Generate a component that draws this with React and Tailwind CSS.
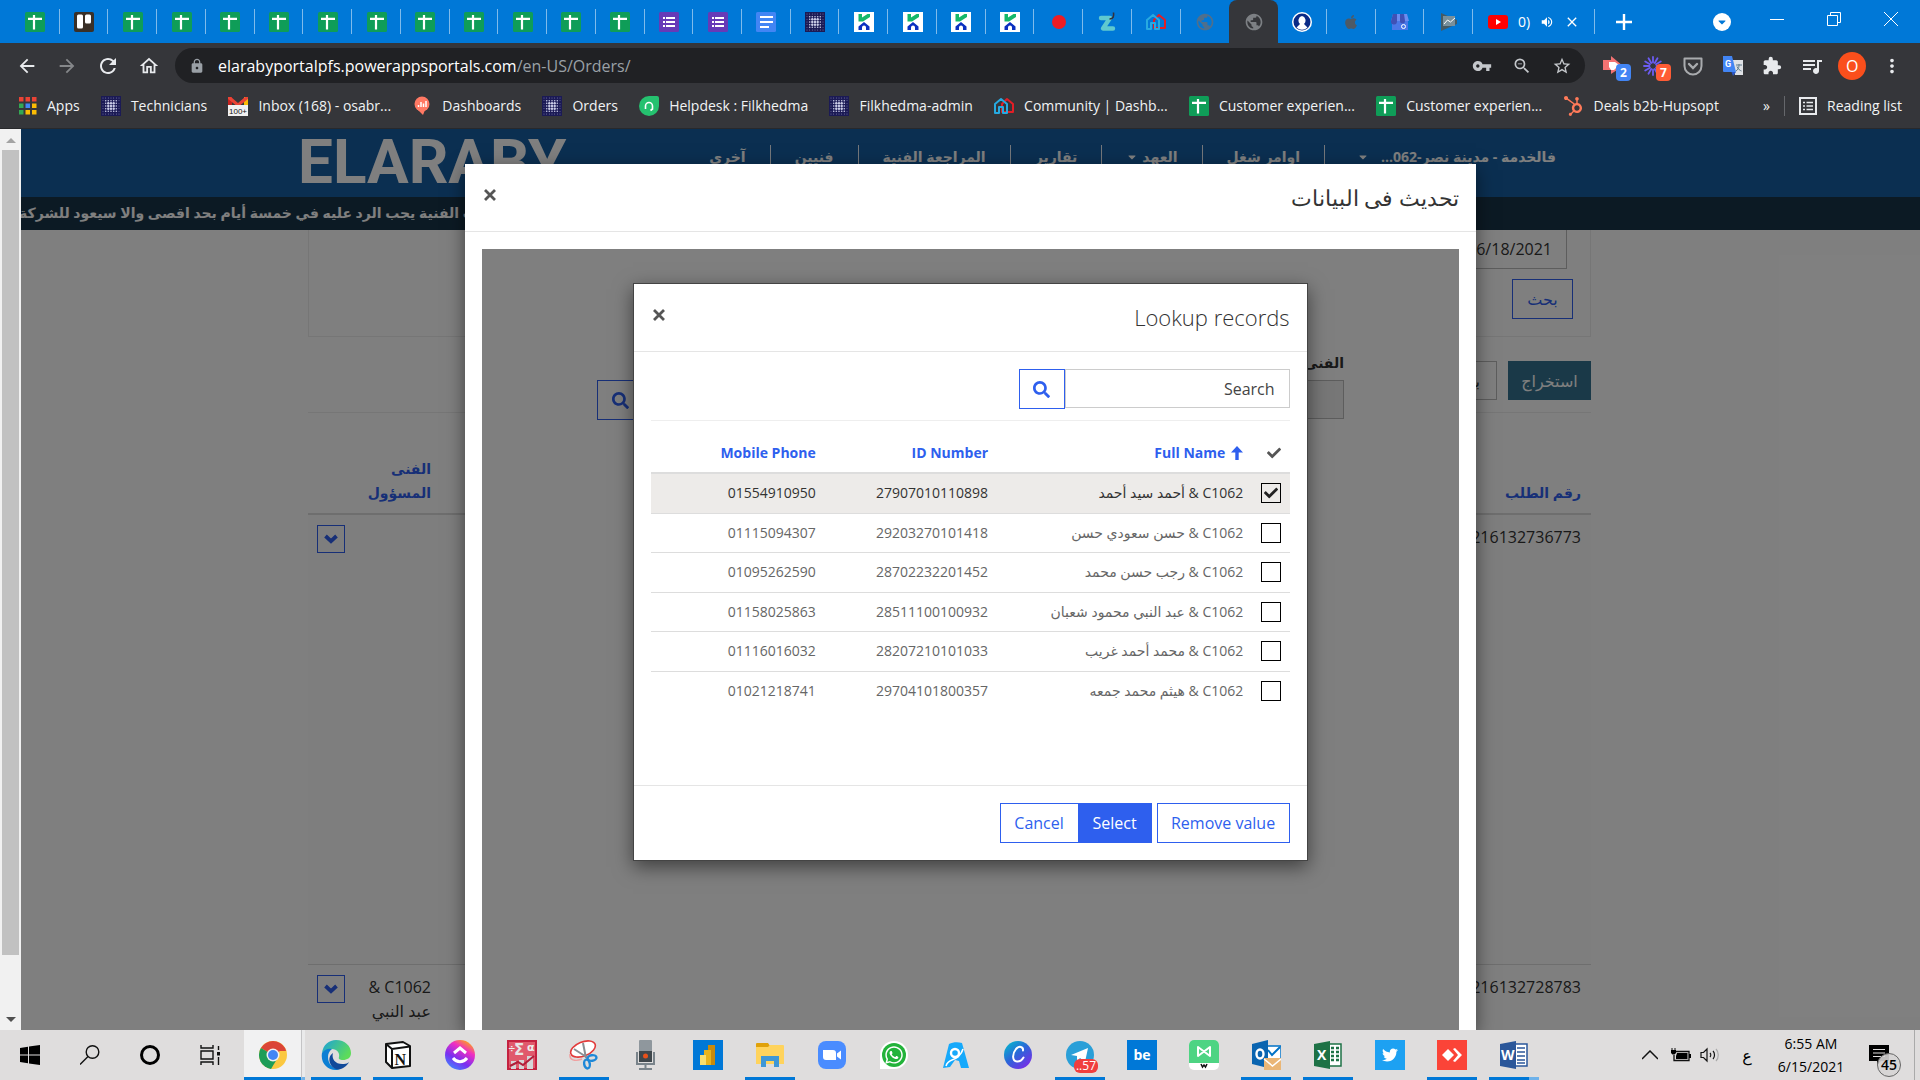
import { useState } from 'react';
import {
  FaApple,
  FaCaretDown,
  FaCheck,
  FaHubspot,
  FaSearch,
  FaTwitter,
  FaWhatsapp
} from 'react-icons/fa';
import {
  MdArrowBack,
  MdArrowForward,
  MdClose,
  MdExtension,
  MdLock,
  MdMoreVert,
  MdOutlineHome,
  MdOutlineZoomOut,
  MdPublic,
  MdQueueMusic,
  MdRefresh,
  MdStarBorder,
  MdVolumeUp,
  MdVpnKey
} from 'react-icons/md';

/* ---------- Site icons ---------- */

const SheetsIcon = () => (
  <svg viewBox="0 0 20 20" className="w-5 h-5">
    <rect width="20" height="20" rx="1.5" fill="#0f9d58" />
    <path d="M3 6.8h14M9 3v14.5" stroke="#fff" strokeWidth="2.2" />
  </svg>
);

const TrelloIcon = () => (
  <svg viewBox="0 0 20 20" className="w-5 h-5">
    <rect width="20" height="20" rx="2" fill="#3a3027" />
    <rect x="3" y="2.5" width="6" height="14" rx="1.5" fill="#fff" />
    <rect x="11" y="2.5" width="6" height="9" rx="1.5" fill="#fff" />
  </svg>
);

const FormsIcon = () => (
  <svg viewBox="0 0 20 20" className="w-5 h-5">
    <rect width="20" height="20" rx="1.5" fill="#673ab7" />
    <path d="M4 6h2M4 10h2M4 14h2M7 6h9M7 10h9M7 14h9" stroke="#fff" strokeWidth="2" />
  </svg>
);

const DocsIcon = () => (
  <svg viewBox="0 0 20 20" className="w-5 h-5">
    <rect width="20" height="20" rx="1.5" fill="#4285f4" />
    <path d="M4 5h13M4 10h13M4 15h9" stroke="#fff" strokeWidth="2" />
  </svg>
);

const DotsIcon = () => (
  <svg viewBox="0 0 20 20" className="w-5 h-5">
    <rect width="20" height="20" fill="#1b1a55" />
    <g fill="#c9cbe6">
      {[2, 4.7, 7.3, 10, 12.7, 15.3, 18].map((x) =>
        [2, 4.7, 7.3, 10, 12.7, 15.3, 18].map((y) => {
          const distance = Math.max(Math.abs(x - 10), Math.abs(y - 10));
          return <circle key={`${x}-${y}`} cx={x} cy={y} r={distance < 3 ? 1.2 : distance < 6 ? 0.8 : 0.4} />;
        })
      )}
    </g>
  </svg>
);

const KIcon = () => (
  <svg viewBox="0 0 20 20" className="w-5 h-5">
    <rect width="20" height="20" fill="#fff" />
    <path d="M4.500 2H8v3.500L13.500 2H16v3l-7 4.500H4.500z" fill="#14b86a" />
    <path d="M4.500 18v-3.500l5.500-4.500 5.500 4.500V18H12v-2.500a2 2 0 0 0-4 0V18z" fill="#0a2fc0" />
  </svg>
);

const RedDotIcon = () => <span className="w-[14px] h-[14px] rounded-full bg-[#ed1c24]" />;

const ZIcon = () => (
  <svg viewBox="0 0 20 20" className="w-5 h-5" fill="none">
    <path d="M3 6h9L5 16.500h10" stroke="#5fc9cf" strokeWidth="4.400" strokeLinejoin="round" strokeLinecap="round" />
    <path d="M11.500 7c4 0 4.500-3 4-6.500" stroke="#33313b" strokeWidth="1.600" />
  </svg>
);

const HouseIcon = () => (
  <svg viewBox="0 0 20 20" className="w-5 h-5" fill="none" strokeWidth="2" strokeLinejoin="round">
    <path d="M8 16V8l5-5 6 5v8z" stroke="#e21e26" />
    <path d="M1 17V8l6-5 6 5v9H9v-6H5v6z" stroke="#27aae1" />
  </svg>
);

const UserIcon = () => (
  <svg viewBox="0 0 20 20" className="w-5 h-5">
    <circle cx="10" cy="10" r="10" fill="#fff" />
    <circle cx="10" cy="10" r="8.500" fill="#0a2a86" />
    <path d="M10 4a4 4.500 0 0 1 2 8l3.500 3.500a8 8 0 0 1-11 0L8 12a4 4.500 0 0 1 2-8z" fill="#fff" />
  </svg>
);

const ShopIcon = () => (
  <svg viewBox="0 0 20 20" className="w-5 h-5">
    <path d="M2 8h16v10H2z" fill="#4a78e8" />
    <path d="M3 2h14l2 7H1z" fill="#6b8df0" />
    <path d="M3 2h4v8a3 3 0 0 1-6-1zM10 2h4l1 7a2.500 2.500 0 0 1-5 0z" fill="#3f51b5" />
    <circle cx="13.500" cy="14.500" r="2" stroke="#fff" fill="none" />
  </svg>
);

const ConsoleIcon = () => (
  <svg viewBox="0 0 20 20" className="w-5 h-5">
    <path d="M2 1l16 7v4L2 19z" fill="#455a64" />
    <path d="M4 4h12v10H4z" fill="#78909c" />
    <path d="M5 12l3.500-4 3 2L16 6" stroke="#fff" fill="none" />
  </svg>
);

const YoutubeIcon = () => (
  <svg viewBox="0 0 20 20" className="w-5 h-5">
    <rect y="3" width="20" height="14" rx="3" fill="#f00" />
    <path d="M8 7v6l5-3z" fill="#fff" />
  </svg>
);

const AppsIcon = () => (
  <svg viewBox="0 0 18 18" className="w-[18px] h-[18px]">
    {['#ea4335', '#ea4335', '#ea4335', '#34a853', '#4285f4', '#fbbc04', '#34a853', '#fbbc04', '#fbbc04'].map((fill, i) => (
      <rect key={i} x={(i % 3) * 6.500} y={Math.floor(i / 3) * 6.500} width="4.500" height="4.500" fill={fill} />
    ))}
  </svg>
);

const GmailIcon = () => (
  <svg viewBox="0 0 20 20" className="w-5 h-5">
    <path d="M0 1h4v9H0z" fill="#c5221f" />
    <path d="M16 1h4v9h-4z" fill="#fbbc04" />
    <path d="M0 1h3l7 6 7-6h3v2L10 11 0 3z" fill="#ea4335" />
    <rect y="9" width="20" height="11" fill="#f1f1f1" />
    <text x="10" y="17.500" fontSize="8" fontFamily="Liberation Sans" textAnchor="middle" fill="#111">100+</text>
  </svg>
);

const RedashIcon = () => (
  <svg viewBox="0 0 20 20" className="w-5 h-5">
    <circle cx="10" cy="8" r="7.500" fill="#ff7964" />
    <path d="M6 14h7l-2 5z" fill="#ff7964" />
    <path d="M6.500 11V9M9 11V6M11.500 11V7.500M14 11V5" stroke="#fff" strokeWidth="1.500" />
  </svg>
);

const HelpdeskIcon = () => (
  <svg viewBox="0 0 20 20" className="w-5 h-5">
    <path d="M10 0h8a2 2 0 0 1 2 2v8A10 10 0 1 1 10 0z" fill="#25c16f" />
    <path d="M6.500 12v-2a3.500 3.500 0 0 1 7 0v2M6.500 11v2M13.500 11v2l-2 1.500" stroke="#fff" strokeWidth="1.600" fill="none" />
  </svg>
);

const ReadingListIcon = () => (
  <svg viewBox="0 0 18 18" className="w-[18px] h-[18px]" fill="none" stroke="#e8eaed">
    <rect x="1" y="1" width="16" height="16" strokeWidth="2" />
    <path d="M4 5.500h2M4 9h2M4 12.500h2M7.500 5.500H14M7.500 9H14M7.500 12.500H14" strokeWidth="1.600" />
  </svg>
);

const PocketIcon = () => (
  <svg viewBox="0 0 20 20" className="w-5 h-5" fill="none" stroke="#a9abae" strokeWidth="2" strokeLinecap="round">
    <path d="M1.500 2.500h17V10a8.500 8.500 0 0 1-17 0z" strokeLinejoin="round" />
    <path d="M6 8l4 4 4-4" strokeWidth="2.400" />
  </svg>
);

const TranslateIcon = () => (
  <svg viewBox="0 0 20 20" className="w-5 h-5">
    <path d="M9 4h11v15h-8z" fill="#dfe1e5" />
    <path d="M13 9h6M16 8v1.500c0 3-1.500 4.500-3 5.500M14 10.500c1 2.500 3 4 4.500 4.500" stroke="#5f7b8c" fill="none" />
    <path d="M0 0h9l4 16H1a1 1 0 0 1-1-1z" fill="#4285f4" />
    <path d="M8.500 16H13l-3 4z" fill="#2a56c6" />
    <text x="2" y="11" fontSize="9" fontWeight="700" fontFamily="Roboto" fill="#fff">G</text>
  </svg>
);

const ArrowExtIcon = () => (
  <svg viewBox="0 0 20 20" className="w-5 h-5">
    <path d="M0 4h8V0l12 10-12 8v-4H0z" fill="#f27272" />
    <path d="M6 6h6l4 3-5 5H8l-2-3z" fill="#fff" />
  </svg>
);

const BurstIcon = () => (
  <svg viewBox="0 0 20 20" className="w-5 h-5" stroke="#6c5cf2" strokeWidth="1.800" strokeLinecap="round">
    {[0, 30, 60, 90, 120, 150, 180, 210, 240, 270, 300, 330].map((a) => (
      <path key={a} d="M10 1v5.500" transform={`rotate(${a} 10 10)`} />
    ))}
  </svg>
);

const CloseIcon = () => (
  <svg viewBox="0 0 12 12" className="w-3 h-3" stroke="#555" strokeWidth="2.800">
    <path d="M1 1l10 10M11 1L1 11" />
  </svg>
);

const SortUpIcon = () => (
  <svg viewBox="0 0 12 14" className="w-3 h-[14px]" fill="currentColor">
    <path d="M6 0l6 6.500H7.700V14H4.300V6.500H0z" />
  </svg>
);

const ChevronDownIcon = () => (
  <svg viewBox="0 0 14 10" className="w-[14px] h-[10px]" fill="none" stroke="currentColor" strokeWidth="3.800">
    <path d="M1.500 2L7 7.200 12.500 2" />
  </svg>
);

/* ---------- Taskbar icons ---------- */

const WindowsIcon = () => (
  <svg viewBox="0 0 20 20" className="w-5 h-5">
    <path d="M0 3l8-1.200v7.700H0zM9 1.600L20 0v9.500H9zM0 10.500h8v7.700L0 17zM9 10.500h11V20L9 18.400z" />
  </svg>
);

const TaskSearchIcon = () => (
  <svg viewBox="0 0 20 20" className="w-5 h-5" fill="none" stroke="#111" strokeWidth="1.400">
    <circle cx="12.500" cy="7" r="6.300" />
    <path d="M8 11.500L0 19.500" />
  </svg>
);

const CortanaIcon = () => <span className="w-5 h-5 rounded-full border-[3px] border-black" />;

const TaskViewIcon = () => (
  <svg viewBox="0 0 20 20" className="w-5 h-5" fill="none" stroke="#111" strokeWidth="1.400">
    <path d="M1 0v3h12V0M1 20v-3h12v3M1 6h12v8H1zM18.500 1v4M18.500 12v8" />
    <path d="M18.500 7v3.500" strokeWidth="3" />
  </svg>
);

const ChromeIcon = () => (
  <svg viewBox="0 0 28 28" className="w-7 h-7">
    <circle cx="14" cy="14" r="14" fill="#fbc841" />
    <path d="M14 14L1.900 7A14 14 0 0 1 26.100 7z" fill="#db4437" />
    <path d="M14 14L1.900 7A14 14 0 0 0 12 27.900l6-10z" fill="#1d9d58" />
    <path d="M14 7h12.100a14 14 0 0 1 .9 3H14z" fill="#db4437" />
    <circle cx="14" cy="14" r="6.500" fill="#f1f1f1" />
    <circle cx="14" cy="14" r="5" fill="#4285f4" />
  </svg>
);

const EdgeIcon = () => (
  <svg viewBox="0 0 30 30" className="w-[30px] h-[30px]">
    <defs>
      <linearGradient id="edgeTop" x1="0" y1="0" x2="1" y2="0.500">
        <stop offset="0" stopColor="#1ba0dc" />
        <stop offset="1" stopColor="#5ddc5a" />
      </linearGradient>
    </defs>
    <path d="M1 13C2 5 8 0 15 0c9 0 15 6 15 13 0 5-4 7-8 7-3 0-5-1-4-3 1-4-2-8-7-8-4 0-8 2-10 4z" fill="url(#edgeTop)" />
    <path d="M1 13c2-3 6-5 10-4-3 2-4 5-4 8 0 7 5 12 12 12.500C9 32-1 25 1 13z" fill="#0c7fd4" />
    <path d="M12 13c-2 6 3 12 11 11 2 0 4-1 5-2-2 4-6 7-11 7.500-8-1-12-12-5-16.500z" fill="#11499a" />
  </svg>
);

const NotionIcon = () => (
  <svg viewBox="0 0 28 28" className="w-7 h-7">
    <path d="M2 3l17-2 7 4v20L8 27l-6-6z" fill="#fff" stroke="#111" strokeWidth="2" strokeLinejoin="round" />
    <path d="M2 3l6 5 18-2.500M8 8v19" stroke="#111" strokeWidth="2" fill="none" />
    <text x="10.500" y="23.500" fontSize="16" fontWeight="700" fontFamily="Liberation Serif" fill="#111">N</text>
  </svg>
);

const ClickUpIcon = () => (
  <svg viewBox="0 0 30 30" className="w-[30px] h-[30px]">
    <defs>
      <linearGradient id="clickup" x1="0.800" y1="0" x2="0.200" y2="1">
        <stop offset="0" stopColor="#ffb300" />
        <stop offset="0.300" stopColor="#f02fc2" />
        <stop offset="0.650" stopColor="#7a2ff0" />
        <stop offset="1" stopColor="#3d8bff" />
      </linearGradient>
    </defs>
    <circle cx="15" cy="15" r="15" fill="url(#clickup)" />
    <path d="M9 13l6-5 6 5M8 18c4 5 10 5 14 0" stroke="#fff" strokeWidth="3" fill="none" />
  </svg>
);

const MathIcon = () => (
  <svg viewBox="0 0 30 30" className="w-[30px] h-[30px]">
    <rect x="1" y="1" width="28" height="28" fill="#e0596c" stroke="#c4213f" strokeWidth="2" />
    <path d="M4 29V21h5v8M12 29v-9h5v9M20 29V16h6v13" fill="#d5d5d8" />
    <path d="M3 26l8-4 5 3 11-9" stroke="#b01e3a" strokeWidth="2" fill="none" />
    <text x="7" y="15" fontSize="15" fontWeight="700" fontFamily="DejaVu Sans" fill="#e6e6e6">Σ</text>
    <text x="20" y="11" fontSize="11" fontWeight="700" fontFamily="DejaVu Sans" fill="#eee">α</text>
    <text x="1" y="12" fontSize="9" fontWeight="700" fontFamily="DejaVu Sans" fill="#eee">÷</text>
  </svg>
);

const SnipIcon = () => (
  <svg viewBox="0 0 30 30" className="w-[30px] h-[30px]" fill="none">
    <ellipse cx="14" cy="9" rx="13" ry="7" transform="rotate(-22 14 9)" fill="#fff" stroke="#e23b3b" strokeWidth="1.600" />
    <path d="M1 14c-1 6 5 8 12 5" stroke="#f0a0a0" strokeWidth="1.400" />
    <path d="M14 3l3 15M5 9l14 9" stroke="#8a8f94" strokeWidth="2" />
    <ellipse cx="23" cy="18" rx="4.500" ry="2.800" transform="rotate(-10 23 18)" stroke="#1e88d8" strokeWidth="2.400" />
    <ellipse cx="18" cy="24" rx="2.800" ry="4.500" transform="rotate(-10 18 24)" stroke="#1e88d8" strokeWidth="2.400" />
  </svg>
);

const RecorderIcon = () => (
  <svg viewBox="0 0 20 30" className="w-5 h-[30px]">
    <rect x="3" width="13" height="13" rx="1" fill="#8f979d" />
    <path d="M3 11h13v11H3z" fill="#3f474c" />
    <circle cx="9.500" cy="16" r="2.500" fill="#e8501a" />
    <path d="M1 12v12h17V12M9.500 24v5M3 29h13" stroke="#79838a" strokeWidth="2" fill="none" />
  </svg>
);

const PowerBiIcon = () => (
  <svg viewBox="0 0 30 30" className="w-[30px] h-[30px]">
    <rect width="30" height="30" fill="#0078d7" />
    <path d="M15 5h7v20h-7z" fill="#c98a0b" />
    <path d="M11 10h7v15h-7z" fill="#e9b41c" />
    <path d="M7 15h6v10H7z" fill="#f8df6e" />
  </svg>
);

const ExplorerIcon = () => (
  <svg viewBox="0 0 28 26" className="w-7 h-[26px]">
    <path d="M0 2a1 1 0 0 1 1-1h11l2 3v4H0z" fill="#e0a10a" />
    <path d="M0 5h12l2-2h13a1 1 0 0 1 1 1v18H0z" fill="#ffd35c" />
    <path d="M5 14h18v11h-5v-6h-8v6H5z" fill="#3f97d6" />
  </svg>
);

const ZoomIcon = () => (
  <svg viewBox="0 0 28 28" className="w-7 h-7">
    <rect width="28" height="28" rx="8" fill="#4a8cff" />
    <path d="M5 9h10a3 3 0 0 1 3 3v7H8a3 3 0 0 1-3-3zM19 12.500l4-3v9l-4-3z" fill="#fff" />
  </svg>
);

const WhatsAppTaskIcon = () => (
  <span className="flex items-center justify-center w-7 h-7 rounded-full rounded-bl-md bg-white">
    <span className="flex items-center justify-center w-6 h-6 rounded-full bg-[#23b33a]">
      <FaWhatsapp className="w-5 h-5 text-white" />
    </span>
  </span>
);

const PeopleIcon = () => (
  <svg viewBox="0 0 28 28" className="w-7 h-7">
    <path d="M7 3c4-2 9-2 13-1l7 25h-8l-2-7-4-1-5 7-7 1z" fill="#16a9fb" />
    <circle cx="13" cy="12" r="4" fill="#16a9fb" stroke="#fff" strokeWidth="2.400" />
    <path d="M4 25c2-7 7-5 12-9 2-2 4-4 5-8" stroke="#fff" strokeWidth="1.600" fill="none" />
  </svg>
);

const CanvaIcon = () => (
  <svg viewBox="0 0 28 28" className="w-7 h-7">
    <defs>
      <linearGradient id="canva" x1="0" y1="0" x2="0.800" y2="1">
        <stop offset="0" stopColor="#00c4cc" />
        <stop offset="0.500" stopColor="#2a67d8" />
        <stop offset="1" stopColor="#7d2ae8" />
      </linearGradient>
    </defs>
    <circle cx="14" cy="14" r="14" fill="url(#canva)" />
    <path d="M19 9.500c.5-4-4-5-7-1.500-4 5-4 12 1 12.500 3 .2 5-1.500 6.500-4" stroke="#fff" strokeWidth="2" fill="none" strokeLinecap="round" />
  </svg>
);

const TelegramIcon = () => (
  <span className="relative">
    <svg viewBox="0 0 28 28" className="w-7 h-7">
      <circle cx="14" cy="14" r="14" fill="#2a9fd8" />
      <path d="M5 14L22 7l-3 14-5-4-3 3v-5z" fill="#fff" />
    </svg>
    <span className="absolute -right-1 -bottom-1 px-[2px] rounded-md bg-[#f03e3e] text-white text-xs leading-[14px]">..57</span>
  </span>
);

const BehanceIcon = () => (
  <span className="flex items-center justify-center w-[30px] h-[30px] bg-[#0078d7] text-white text-sm font-bold">be</span>
);

const FilmoraIcon = () => (
  <svg viewBox="0 0 30 30" className="w-[30px] h-[30px]">
    <rect width="30" height="30" rx="5" fill="#fff" />
    <path d="M5 0h20a5 5 0 0 1 5 5v18H0V5a5 5 0 0 1 5-5z" fill="#4ed483" />
    <path d="M9 16V7l12 9V7z" fill="none" stroke="#fff" strokeWidth="2" strokeLinejoin="round" />
    <path d="M12 24l1.500 3 1.500-2 1.500 2 1.500-3" stroke="#111" strokeWidth="1.500" fill="none" />
  </svg>
);

const OutlookIcon = () => (
  <svg viewBox="0 0 30 30" className="w-[30px] h-[30px]">
    <path d="M15 6h15v14H15z" fill="#fff" stroke="#0072c6" strokeWidth="1.500" />
    <path d="M17 10l4 5 8-8" stroke="#0072c6" strokeWidth="2" fill="none" />
    <path d="M1 4l16-4v28L1 24z" fill="#0a64b0" />
    <ellipse cx="9" cy="14" rx="3.500" ry="4.500" fill="none" stroke="#fff" strokeWidth="2.400" />
    <path d="M13 18h17v12H13z" fill="#eab676" />
    <path d="M13 19l8.500 7 8.500-7" stroke="#fff" strokeWidth="1.500" fill="none" />
  </svg>
);

const ExcelIcon = () => (
  <svg viewBox="0 0 28 28" className="w-7 h-7">
    <path d="M13 3h14v22H13z" fill="#fff" stroke="#1e7145" strokeWidth="1.500" />
    <path d="M17 7h3M22 7h3M17 11h3M22 11h3M17 15h3M22 15h3M17 19h3M22 19h3" stroke="#1e7145" strokeWidth="2.400" />
    <path d="M0 3l16-3v28L0 25z" fill="#1e7145" />
    <text x="3" y="19" fontSize="14" fontWeight="700" fontFamily="Open Sans" fill="#fff">X</text>
  </svg>
);

const WordIcon = () => (
  <svg viewBox="0 0 28 28" className="w-7 h-7">
    <path d="M13 3h14v22H13z" fill="#fff" stroke="#2b579a" strokeWidth="1.500" />
    <path d="M17 7h8M17 11h8M17 15h8M17 19h8M17 22h8" stroke="#2b579a" strokeWidth="1.600" />
    <path d="M0 3l16-3v28L0 25z" fill="#2b579a" />
    <text x="1" y="19" fontSize="14" fontWeight="700" fontFamily="Open Sans" fill="#fff">W</text>
  </svg>
);

const TwitterTaskIcon = () => (
  <span className="flex items-center justify-center w-[30px] h-[30px] bg-[#1da1f2]">
    <FaTwitter className="w-4 h-4 text-white" />
  </span>
);

const AnyDeskIcon = () => (
  <svg viewBox="0 0 30 30" className="w-[30px] h-[30px]">
    <rect width="30" height="30" fill="#fb4438" />
    <path d="M5 15l6-6 6 6-6 6z" fill="#fff" />
    <path d="M16 9l2-1 7 7-7 7-2-1 5-6z" fill="#fff" />
  </svg>
);

/* ---------- Data ---------- */

const leadingTabs = [
  SheetsIcon, TrelloIcon,
  SheetsIcon, SheetsIcon, SheetsIcon, SheetsIcon, SheetsIcon, SheetsIcon,
  SheetsIcon, SheetsIcon, SheetsIcon, SheetsIcon, SheetsIcon,
  FormsIcon, FormsIcon, DocsIcon, DotsIcon,
  KIcon, KIcon, KIcon, KIcon,
  RedDotIcon, ZIcon, HouseIcon
];

const bookmarks = [
  { label: 'Apps', icon: AppsIcon },
  { label: 'Technicians', icon: DotsIcon },
  { label: 'Inbox (168) - osabr...', icon: GmailIcon },
  { label: 'Dashboards', icon: RedashIcon },
  { label: 'Orders', icon: DotsIcon },
  { label: 'Helpdesk : Filkhedma', icon: HelpdeskIcon },
  { label: 'Filkhedma-admin', icon: DotsIcon },
  { label: 'Community | Dashb...', icon: HouseIcon },
  { label: 'Customer experien...', icon: SheetsIcon },
  { label: 'Customer experien...', icon: SheetsIcon },
  { label: 'Deals b2b-Hupsopt', icon: () => <FaHubspot className="w-5 h-5 text-[#ff7a59]" /> }
];

const navItems = ['اوامر شغل', 'العهد', 'تقارير', 'المراجعة الفنية', 'فنيين', 'آخرى'];

const records = [
  { name: 'C1062 & أحمد سيد أحمد', idNumber: '27907010110898', phone: '01554910950' },
  { name: 'C1062 & حسن سعودي حسن', idNumber: '29203270101418', phone: '01115094307' },
  { name: 'C1062 & رجب حسن محمد', idNumber: '28702232201452', phone: '01095262590' },
  { name: 'C1062 & عبد النبي محمود شعبان', idNumber: '28511100100932', phone: '01158025863' },
  { name: 'C1062 & محمد أحمد غريب', idNumber: '28207210101033', phone: '01116016032' },
  { name: 'C1062 & هيثم محمد جمعه', idNumber: '29704101800357', phone: '01021218741' }
];

const taskbarApps = [
  { name: 'Edge', icon: EdgeIcon, running: true },
  { name: 'Notion', icon: NotionIcon, running: true },
  { name: 'ClickUp', icon: ClickUpIcon },
  { name: 'Math', icon: MathIcon },
  { name: 'Snipping Tool', icon: SnipIcon, running: true },
  { name: 'Recorder', icon: RecorderIcon },
  { name: 'Power BI', icon: PowerBiIcon },
  { name: 'Explorer', icon: ExplorerIcon, running: true },
  { name: 'Zoom', icon: ZoomIcon },
  { name: 'WhatsApp', icon: WhatsAppTaskIcon },
  { name: 'People', icon: PeopleIcon },
  { name: 'Canva', icon: CanvaIcon },
  { name: 'Telegram', icon: TelegramIcon, running: true },
  { name: 'Behance', icon: BehanceIcon },
  { name: 'Filmora', icon: FilmoraIcon },
  { name: 'Outlook', icon: OutlookIcon, running: true },
  { name: 'Excel', icon: ExcelIcon, running: true },
  { name: 'Twitter', icon: TwitterTaskIcon },
  { name: 'AnyDesk', icon: AnyDeskIcon, running: true },
  { name: 'Word', icon: WordIcon, running: true, stacked: true }
];

/* ---------- Browser ---------- */

const Tab = ({ children, divider = true }) => (
  <div className="relative flex flex-1 items-center justify-center h-full">
    {children}
    {divider && <span className="absolute right-0 top-[9px] w-px h-[25px] bg-[#7fbbeb]" />}
  </div>
);

const TabStrip = () => (
  <div className="flex h-[43px] pl-[11px] bg-[#0078d7]">
    <div className="flex flex-1">
      {leadingTabs.map((Icon, i) => (
        <Tab key={i}><Icon /></Tab>
      ))}
      <Tab divider={false}><MdPublic className="w-5 h-5 text-[#4f6f8c]" /></Tab>
      <div className="flex flex-1 items-center justify-center rounded-t-lg bg-[#35363a]">
        <MdPublic className="w-5 h-5 text-[#7d8084]" />
      </div>
      <Tab><UserIcon /></Tab>
      <Tab><FaApple className="w-4 h-4 text-[#4d5a66]" /></Tab>
      <Tab><ShopIcon /></Tab>
      <Tab><ConsoleIcon /></Tab>
      <div className="relative flex flex-[2.5] items-center">
        <div className="flex items-center gap-[10px] pl-[15px] text-white text-sm">
          <YoutubeIcon />
          <span>0)</span>
          <MdVolumeUp className="w-[14px] h-[14px]" />
          <button type="button" aria-label="Close tab"><MdClose className="w-4 h-4" /></button>
        </div>
        <span className="absolute right-0 top-[9px] w-px h-[25px] bg-[#7fbbeb]" />
      </div>
    </div>
    <div className="flex w-[325px] items-center text-white">
      <button type="button" aria-label="New tab" className="flex w-[57px] justify-center">
        <svg viewBox="0 0 16 16" className="w-4 h-4" stroke="#fff" strokeWidth="2.400"><path d="M8 0v16M0 8h16" /></svg>
      </button>
      <button type="button" aria-label="Search tabs" className="ml-[61px] flex w-[18px] h-[18px] items-center justify-center rounded-full bg-white">
        <FaCaretDown className="w-3 h-3 text-[#0078d7]" />
      </button>
      <div className="flex flex-1 items-center justify-between pl-[39px] pr-[22px] pb-[6px]">
        <button type="button" aria-label="Minimize"><svg viewBox="0 0 14 14" className="w-[14px] h-[14px]" stroke="#fff"><path d="M0 7.500h14" /></svg></button>
        <button type="button" aria-label="Restore"><svg viewBox="0 0 14 14" className="w-[14px] h-[14px]" stroke="#fff" fill="none"><path d="M.5 3.500h10v10H.5zM3.500 3V.5h10v10H11" /></svg></button>
        <button type="button" aria-label="Close"><svg viewBox="0 0 14 14" className="w-[14px] h-[14px]" stroke="#fff"><path d="M0 0l14 14M14 0L0 14" /></svg></button>
      </div>
    </div>
  </div>
);

const ExtensionBadge = ({ children, count, color }) => (
  <span className="relative">
    {children}
    <span className={`absolute -right-2 top-2 w-[15px] h-[17px] rounded-sm text-center text-xs leading-[17px] font-bold text-white ${color}`}>
      {count}
    </span>
  </span>
);

const Toolbar = () => (
  <div className="flex h-[45px] items-center bg-[#35363a] text-[#e8eaed]">
    <div className="flex w-[175px] items-center gap-[18px] pl-4">
      <button type="button" aria-label="Back"><MdArrowBack className="w-[22px] h-[22px]" /></button>
      <button type="button" aria-label="Forward"><MdArrowForward className="w-[22px] h-[22px] text-[#85878a]" /></button>
      <button type="button" aria-label="Reload"><MdRefresh className="w-6 h-6" /></button>
      <button type="button" aria-label="Home"><MdOutlineHome className="w-[22px] h-[22px]" /></button>
    </div>
    <div className="flex flex-1 h-[35px] items-center rounded-full bg-[#202124] pl-[14px] pr-[13px]">
      <MdLock className="w-4 h-4 text-[#9aa0a6]" />
      <span className="pl-[13px] text-base text-white">elarabyportalpfs.powerappsportals.com</span>
      <span className="flex-1 text-base text-[#9aa0a6]">/en-US/Orders/</span>
      <span className="flex items-center gap-[20px] text-[#c4c7cb]">
        <MdVpnKey className="w-5 h-5" />
        <MdOutlineZoomOut className="w-5 h-5" />
        <MdStarBorder className="w-5 h-5" />
      </span>
    </div>
    <div className="grid w-[335px] grid-cols-8 place-items-center px-2">
      <ExtensionBadge count="2" color="bg-[#4285f4]"><ArrowExtIcon /></ExtensionBadge>
      <ExtensionBadge count="7" color="bg-[#ff5c35]"><BurstIcon /></ExtensionBadge>
      <PocketIcon />
      <TranslateIcon />
      <MdExtension className="w-5 h-5" />
      <MdQueueMusic className="w-6 h-6" />
      <span className="flex items-center justify-center w-7 h-7 rounded-full bg-[#fa4f1c] text-white text-base">O</span>
      <MdMoreVert className="w-[22px] h-[22px]" />
    </div>
  </div>
);

const BookmarkBar = () => (
  <div className="flex h-[41px] items-center border-b border-[#28292c] bg-[#35363a] pl-[19px] pb-1 pr-[18px] text-sm text-[#f1f3f4]">
    <div className="flex flex-1 items-center justify-between whitespace-nowrap">
      {bookmarks.map(({ label, icon: Icon }, i) => (
        <a key={i} href="#bookmark" className="flex items-center gap-[10px]">
          <Icon />
          {label}
        </a>
      ))}
    </div>
    <div className="flex items-center justify-end w-[183px] whitespace-nowrap">
      <span>»</span>
      <span className="mx-[14px] w-px h-5 bg-[#65676b]" />
      <a href="#reading-list" className="flex items-center gap-[10px]">
        <ReadingListIcon />
        Reading list
      </a>
    </div>
  </div>
);

/* ---------- Portal page ---------- */

const Scrollbar = () => (
  <div className="flex flex-col items-center w-[21px] h-full bg-[#f1f1f1]">
    <svg viewBox="0 0 10 5" className="mt-[9px] mb-[7px] w-[10px] h-[5px]" fill="#a3a3a3"><path d="M5 0l5 5H0z" /></svg>
    <div className="w-[17px] flex-1 bg-[#c1c1c1]" />
    <svg viewBox="0 0 10 5" className="mt-[62px] mb-2 w-[10px] h-[5px]" fill="#505050"><path d="M5 5l5-5H0z" /></svg>
  </div>
);

const RowMenuButton = () => (
  <button type="button" aria-label="Row actions" className="flex items-center justify-center w-7 h-7 border border-[#2e5fee] text-[#2e5fee]">
    <ChevronDownIcon />
  </button>
);

const PortalHeader = () => (
  <header>
    <div className="flex h-[68px] items-start bg-[#165fa3] pl-[277px] pr-[364px] text-white">
      <a href="#home" className="pt-[2px] font-['Roboto'] text-[62px] leading-[62px] font-bold">ELARABY</a>
      <nav dir="rtl" className="flex flex-1 pt-4 text-sm leading-6 font-bold">
        <a href="#account" className="flex items-center gap-3 pl-8 whitespace-nowrap">
          فالخدمة - مدينة نصر-062...
          <FaCaretDown className="w-3 h-3" />
        </a>
        {navItems.map((item) => (
          <a key={item} href="#nav" className="flex items-center gap-1 px-6 border-r border-white/90 whitespace-nowrap">
            {item}
            {item === 'العهد' && <FaCaretDown className="w-3 h-3" />}
          </a>
        ))}
      </nav>
    </div>
    <div className="h-[33px] overflow-hidden bg-[#183449] text-white">
      <p dir="rtl" className="w-[24%] text-sm leading-[31px] font-bold whitespace-nowrap">
        ت الفنية يجب الرد عليه في خمسة أيام بحد اقصى والا سيعود للشركة
      </p>
    </div>
  </header>
);

const OrdersPage = () => (
  <div dir="rtl" className="flex-1 bg-white pl-[287px] pr-[329px] text-base text-[#333]">
    <div className="flex flex-col items-start h-[107px] border-x border-b border-[#ececec] pr-[17px]">
      <div className="flex items-center w-[320px] h-[39px] mr-[6px] border border-t-0 border-[#bbb] px-[14px]">6/18/2021</div>
      <button type="button" className="mt-[10px] h-10 w-[61px] border border-[#2e5fee] text-[#2e5fee]">بحث</button>
    </div>
    <div className="mt-6 flex gap-[11px]">
      <button type="button" className="h-[39px] w-[83px] bg-[#347290] text-white">استخراج</button>
      <div className="flex items-center w-[280px] h-[39px] border border-[#bbb] px-4">بحث</div>
    </div>
    <table className="mt-3 w-full border-t border-[#ececec]">
      <thead>
        <tr className="border-b-2 border-[#ddd] align-bottom text-sm leading-6 text-[#2e5fee]">
          <th className="h-[101px] px-[10px] pb-2 text-right">رقم الطلب</th>
          <th className="w-[80px] pb-2 text-right">الفنى المسؤول</th>
          <th className="w-[43px]" aria-label="Actions" />
        </tr>
      </thead>
      <tbody className="align-top">
        <tr className="h-[451px] border-b border-[#ddd] bg-[#fdfdfd]">
          <td className="px-[10px] pt-[10px]">216132736773</td>
          <td />
          <td className="pt-[10px] pr-[6px]"><RowMenuButton /></td>
        </tr>
        <tr>
          <td className="px-[10px] pt-[10px]">216132728783</td>
          <td className="pt-[10px] leading-6">C1062 &amp;<br />عبد النبي</td>
          <td className="pt-[10px] pr-[6px]"><RowMenuButton /></td>
        </tr>
      </tbody>
    </table>
  </div>
);

const ModalHeader = ({ title }) => (
  <div className="flex h-[68px] items-center justify-between border-b border-[#e5e5e5] px-[17px] text-[22px] font-light text-[#333]">
    <h2>{title}</h2>
    <button type="button" aria-label="Close dialog" className="mb-[6px] p-[2px]"><CloseIcon /></button>
  </div>
);

const LookupModal = () => {
  const [selected, setSelected] = useState('27907010110898');

  return (
    <div dir="rtl" className="w-[69%] border border-[#444] bg-white text-[#333] shadow-[0_6px_18px_rgba(0,0,0,0.5)]">
      <ModalHeader title="Lookup records" />
      <div className="px-[17px] pt-[17px] pb-[75px]">
        <div className="flex border-b border-[#eee] pb-[11px]">
          <input
            type="text"
            aria-label="Search records"
            placeholder="Search"
            className="w-[225px] h-[39px] border border-[#ccc] px-[14px] text-base placeholder:text-[#444]"
          />
          <button type="button" aria-label="Search" className="flex items-center justify-center w-[46px] h-10 border border-[#2e5fee] text-[#2e5fee]">
            <FaSearch className="w-[17px] h-[17px]" />
          </button>
        </div>
        <table className="w-full table-fixed text-sm text-right">
          <thead>
            <tr className="h-[52px] border-b-2 border-[#ddd] align-bottom text-[#2e5fee]">
              <th className="w-[6%] pb-3"><FaCheck className="mr-[9px] w-[14px] h-[14px] text-[#555]" aria-label="Selected" /></th>
              <th className="w-[40%] px-2 pb-[9px]">
                <span className="flex items-center gap-[6px]">
                  <SortUpIcon />
                  Full Name
                </span>
              </th>
              <th className="w-[27%] px-2 pb-[9px]">ID Number</th>
              <th className="w-[27%] px-2 pb-[9px]">Mobile Phone</th>
            </tr>
          </thead>
          <tbody className="text-[#666]">
            {records.map((record) => {
              const checked = record.idNumber === selected;
              return (
                <tr
                  key={record.idNumber}
                  className={`odd:h-10 even:h-[39px] border-b border-[#ddd] last:border-b-0 ${checked ? 'bg-[#edebe9] text-[#333]' : ''}`}
                >
                  <td className="pr-[9px]">
                    <span className="relative flex w-5 h-5">
                      <input
                        type="checkbox"
                        aria-label={record.name}
                        checked={checked}
                        onChange={() => setSelected(checked ? '' : record.idNumber)}
                        className="w-5 h-5 appearance-none border border-black"
                      />
                      {checked && <FaCheck className="absolute inset-[3px] w-[14px] h-[14px] pointer-events-none text-[#222]" />}
                    </span>
                  </td>
                  <td className="px-2 whitespace-nowrap">{record.name}</td>
                  <td className="px-2">{record.idNumber}</td>
                  <td className="px-2">{record.phone}</td>
                </tr>
              );
            })}
          </tbody>
        </table>
      </div>
      <div className="flex border-t border-[#e5e5e5] p-[17px] text-base">
        <button type="button" className="h-10 w-[133px] border border-[#2e5fee] text-[#2e5fee]">Remove value</button>
        <button type="button" className="mr-[5px] h-10 w-[74px] border border-[#2e5fee] bg-[#2e5fee] text-white">Select</button>
        <button type="button" className="h-10 w-[78px] border border-r-0 border-[#2e5fee] text-[#2e5fee]">Cancel</button>
      </div>
    </div>
  );
};

const EditModal = () => (
  <div dir="rtl" className="flex h-full w-[1011px] max-w-full flex-col bg-white shadow-[0_6px_18px_rgba(0,0,0,0.5)]">
    <ModalHeader title="تحديث فى البيانات" />
    <div className="relative flex-1 mx-[17px] mt-[17px] overflow-hidden bg-white">
      <div className="px-[115px] pt-[101px] text-base text-[#333]">
        <label htmlFor="technician" className="block pb-1 text-sm leading-[26px] font-bold">الفنى</label>
        <div className="flex">
          <input id="technician" type="text" disabled className="flex-1 h-[39px] border border-[#bbb] bg-[#eee]" />
          <button type="button" aria-label="Find technician" className="flex items-center justify-center w-[46px] h-10 border border-[#2e5fee] text-[#2e5fee]">
            <FaSearch className="w-[17px] h-[17px]" />
          </button>
        </div>
      </div>
      <div className="absolute inset-0 flex items-start justify-center bg-black/50 pt-[34px]">
        <LookupModal />
      </div>
    </div>
  </div>
);

/* ---------- Taskbar ---------- */

const Taskbar = () => (
  <footer className="flex h-[50px] items-stretch bg-[#dfdddd] text-black">
    <div className="flex w-[244px] pr-1">
      {[WindowsIcon, TaskSearchIcon, CortanaIcon, TaskViewIcon].map((Icon, i) => (
        <button key={i} type="button" aria-label="System" className="flex flex-1 items-center justify-center"><Icon /></button>
      ))}
    </div>
    <button type="button" aria-label="Chrome" className="flex w-[57px] items-center justify-center border-b-[3px] border-[#0078d7] bg-[#f1f1f2] pt-[3px]">
      <ChromeIcon />
    </button>
    <span className="w-1 border-l border-b-[3px] border-l-[#c4c4c6] border-b-[#6fb2ea] bg-[#eaeaeb]" />
    {taskbarApps.map(({ name, icon: Icon, running, stacked }) => (
      <button key={name} type="button" aria-label={name} className="relative flex w-[62px] items-center justify-center">
        <Icon />
        {running && (
          <span className={`absolute bottom-0 inset-x-[6px] h-[3px] bg-[#0078d7] ${stacked ? 'border-r-[10px] border-[#6fb2ea]' : ''}`} />
        )}
      </button>
    ))}
    <div className="flex flex-1 items-center justify-end">
      <svg viewBox="0 0 16 10" className="w-4 h-[10px]" fill="none" stroke="#111" strokeWidth="1.500"><path d="M0 9l8-8 8 8" /></svg>
      <svg viewBox="0 0 20 14" className="ml-[13px] w-5 h-[14px]">
        <path d="M5 3.500h13v9H3V7" fill="none" stroke="#111" strokeWidth="1.300" />
        <path d="M6 5h10.500v6H5V8zM18 6h2v4h-2zM0 2h5v3l-1.500 1.500h-2L0 5z" />
        <path d="M1 0v2M4 0v2" stroke="#111" />
      </svg>
      <svg viewBox="0 0 20 16" className="ml-[9px] w-5 h-4" fill="none" stroke="#111" strokeWidth="1.200">
        <path d="M1 5.500h2.500L7 2v12l-3.500-3.500H1z" />
        <path d="M10 6c1 1 1 3 0 4M13 4c2 2 2 6 0 8" />
        <path d="M16 2c3 3 3 9 0 12" stroke="#aaa" />
      </svg>
      <span className="w-[54px] text-center text-base">ع</span>
      <div className="w-[74px] text-center text-sm leading-[23px] whitespace-nowrap">
        <p>6:55 AM</p>
        <p>6/15/2021</p>
      </div>
      <div className="relative ml-[21px] mr-[25px]">
        <svg viewBox="0 0 20 20" className="w-5 h-5">
          <path d="M0 0h20v16h-8l-4 4v-4H0z" />
          <path d="M4 4.500h12M4 8h12M4 11.500h12" stroke="#dfdddd" strokeWidth="1.200" />
        </svg>
        <span className="absolute left-2 top-2 flex items-center justify-center w-6 h-6 rounded-full border border-[#666] bg-[#d6d4d4]/90 text-sm font-semibold">45</span>
      </div>
      <span className="h-full w-[6px] border-l border-[#aaa]" />
    </div>
  </footer>
);

const App = () => (
  <div className="flex h-screen flex-col overflow-hidden font-['Open_Sans','Noto_Sans','DejaVu_Sans',sans-serif]">
    <TabStrip />
    <Toolbar />
    <BookmarkBar />
    <main className="flex min-h-0 flex-1">
      <Scrollbar />
      <div className="relative flex flex-1 flex-col overflow-hidden">
        <PortalHeader />
        <OrdersPage />
        <div className="absolute inset-0 flex justify-center bg-black/50 pt-[35px]">
          <EditModal />
        </div>
      </div>
    </main>
    <Taskbar />
  </div>
);

export default App;
